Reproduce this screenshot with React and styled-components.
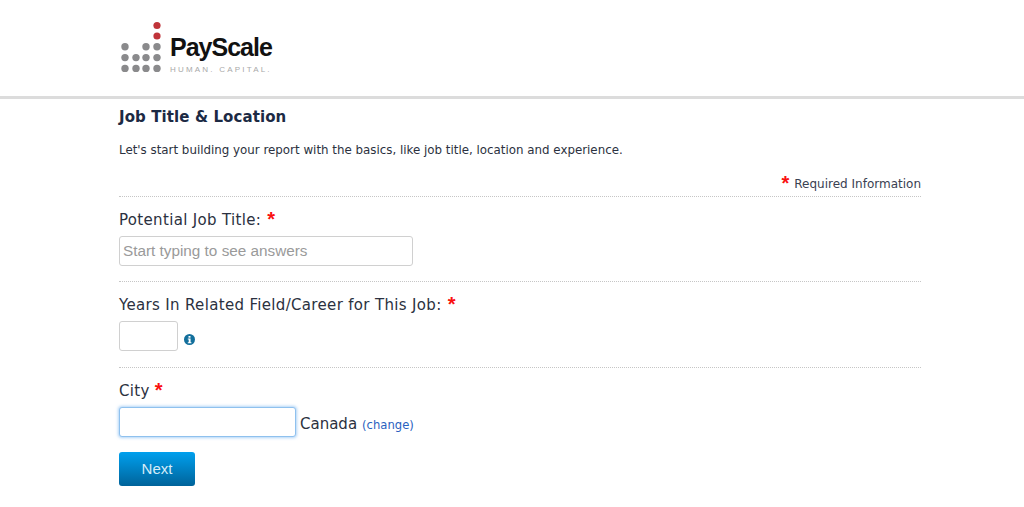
import React from "react";
import styled, { createGlobalStyle } from "styled-components";

const Global = createGlobalStyle`
  html, body { margin: 0; padding: 0; background: #fff; }
  body { font-family: "DejaVu Sans", Verdana, sans-serif; color: #2b3140; }
  * { box-sizing: border-box; }
`;
const Page = styled.div`
  min-height: 507px;
`;
const Header = styled.header`
  height: 99px;
  border-bottom: 3px solid #dcdcdc;
  padding: 21px 0 0 120px;
`;
const Logo = styled.div`
  display: flex;
  align-items: flex-start;
  gap: 9px;
`;
const LogoText = styled.div`
  display: flex;
  flex-direction: column;
  margin-top: 12px;
  font-family: "Liberation Sans", Arial, sans-serif;
`;
const Brand = styled.span`
  font-size: 25px;
  line-height: 28px;
  font-weight: 700;
  letter-spacing: -1px;
  color: #111;
`;
const Tagline = styled.span`
  font-size: 8px;
  line-height: 9px;
  margin-top: 4px;
  letter-spacing: 2.2px;
  color: #a9a9a9;
  white-space: nowrap;
`;
const Main = styled.main`
  width: 802px;
  margin-left: 119px;
`;
const Title = styled.h1`
  margin: 9px 0 0;
  font-size: 15px;
  line-height: 18px;
  font-weight: 700;
  letter-spacing: 0.1px;
  color: #1c2a44;
`;
const Intro = styled.p`
  margin: 16px 0 0;
  font-size: 11.85px;
  line-height: 16px;
  color: #2b3140;
`;
const Required = styled.div`
  display: flex;
  justify-content: flex-end;
  align-items: center;
  gap: 5px;
  margin-top: 14px;
  height: 24px;
  font-size: 12px;
  color: #3a4152;
`;
const Star = styled.span`
  color: #fa1010;
  font-size: 20px;
  line-height: 0;
  font-family: "Liberation Sans", Arial, sans-serif;
  font-weight: 700;
  margin-left: ${p => p.$gap || 0}px;
  position: relative;
  top: ${p => p.$top ?? -1}px;
`;
const Field = styled.section`
  border-top: 1px dotted #c6c6c6;
  min-height: ${p => p.$h}px;
  padding-top: 14px;
`;
const Label = styled.label`
  display: block;
  font-size: 15px;
  letter-spacing: 0.33px;
  line-height: 18px;
  color: #2b3140;
`;
const Row = styled.div`
  display: flex;
  align-items: center;
  margin-top: 7px;
`;
const Input = styled.input`
  width: ${p => p.$w}px;
  height: 30px;
  border: 1px solid #d0d0d0;
  border-radius: 3px;
  padding: 0 3px;
  background: #fff;
  font-family: "Liberation Sans", Arial, sans-serif;
  font-size: 15.3px;
  outline: none;
  &::placeholder { color: #9a9a9a; opacity: 1; }
  ${p => p.$focus ? `
    border-color: #8fc1ee;
    box-shadow: 0 0 3px 1px rgba(110, 175, 240, 0.55);
  ` : ""}
`;
const InfoIcon = styled.svg`
  width: 11px;
  height: 11px;
  margin-left: 6px;
  margin-top: 7px;
`;
const Country = styled.span`
  font-size: 15px;
  margin-left: 4px;
  margin-top: 4px;
`;
const Change = styled.a`
  font-size: 11.6px;
  color: #2a62c0;
  text-decoration: none;
  margin-left: 5px;
  margin-top: 6px;
`;
const NextButton = styled.button`
  display: block;
  width: 76px;
  height: 34px;
  margin-top: 15px;
  padding: 0 0 2px;
  border: 0;
  border-radius: 3px;
  background: linear-gradient(#00a0ee, #00639a);
  color: #d5ecf8;
  font-family: "Liberation Sans", Arial, sans-serif;
  font-size: 15px;
`;

const rows = [[125,146,157],[125,136,146,157],[125,136,146,157]];
const ys = [46.7,57.6,68.4];

export default function App() {
  return (
    <Page>
      <Global />
      <Header>
        <Logo>
          <svg width="41" height="55" viewBox="120 21 41 55">
            <circle cx="157" cy="25.5" r="3.6" fill="#c0343a" />
            <circle cx="157" cy="36" r="3.6" fill="#c0343a" />
            {rows.map((r, i) => r.map(x => <circle key={`${i}-${x}`} cx={x} cy={ys[i]} r="3.7" fill="#8a8a8c" />))}
          </svg>
          <LogoText>
            <Brand>PayScale</Brand>
            <Tagline>HUMAN. CAPITAL.</Tagline>
          </LogoText>
        </Logo>
      </Header>
      <Main>
        <Title>Job Title &amp; Location</Title>
        <Intro>Let's start building your report with the basics, like job title, location and experience.</Intro>
        <Required><Star>*</Star>Required Information</Required>
        <Field $h={85}>
          <Label>Potential Job Title: <Star $gap={1} $top={1}>*</Star></Label>
          <Row><Input $w={294} placeholder="Start typing to see answers" /></Row>
        </Field>
        <Field $h={86}>
          <Label>Years In Related Field/Career for This Job: <Star $gap={1} $top={1}>*</Star></Label>
          <Row>
            <Input $w={59} />
            <InfoIcon viewBox="0 0 11 11">
              <circle cx="5.5" cy="5.5" r="5.5" fill="#136f9c" />
              <rect x="4.5" y="2" width="2" height="1.7" fill="#fff" />
              <path d="M3.8 4.6h2.8v3.6h.8v1H3.8v-1h.9V5.6h-.9z" fill="#fff" />
            </InfoIcon>
          </Row>
        </Field>
        <Field $h={85}>
          <Label>City <Star $top={1}>*</Star></Label>
          <Row>
            <Input $w={177} $focus />
            <Country>Canada</Country>
            <Change href="#">(change)</Change>
          </Row>
          <NextButton>Next</NextButton>
        </Field>
      </Main>
    </Page>
  );
}
